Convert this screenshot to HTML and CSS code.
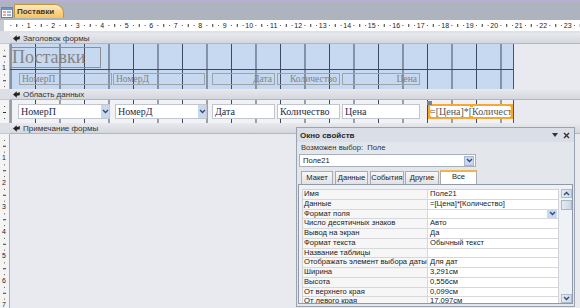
FILE: index.html
```html
<!DOCTYPE html>
<html lang="ru">
<head>
    <meta charset="UTF-8">
    <title>Поставки</title>
    <link rel="stylesheet" href="styles.css">
</head>
<body>
    <div class="topline"></div>

    <div class="tabbar">
        <span class="doc-icon">
            <svg width="12" height="11" viewBox="0 0 12 11">
                <rect x="0.5" y="0.5" width="11" height="10" fill="#fff" stroke="#6f83a3"/>
                <rect x="1" y="1" width="10" height="2" fill="#6d93d2"/>
                <rect x="2" y="4.5" width="3" height="1" fill="#d25050"/>
                <rect x="6" y="4" width="4" height="2" fill="#9fb6da"/>
                <rect x="2" y="7.5" width="3" height="1" fill="#d25050"/>
                <rect x="6" y="7" width="4" height="2" fill="#9fb6da"/>
            </svg>
        </span>
        <div class="doc-tab">Поставки</div>
    </div>

    <div class="hruler-row">
        <div class="corner"></div>
        <div class="hruler">
            <span>1</span><span>2</span><span>3</span><span>4</span><span>5</span><span>6</span>
            <span>7</span><span>8</span><span>9</span><span>10</span><span>11</span><span>12</span>
            <span>13</span><span>14</span><span>15</span><span>16</span><span>17</span><span>18</span>
            <span>19</span><span>20</span><span>21</span><span>22</span><span>23</span>
        </div>
    </div>
    <div class="spacer"></div>

    <!-- Заголовок формы -->
    <div class="bar-row">
        <div class="bar-side"></div>
        <div class="bar">
            <svg width="7" height="7" viewBox="0 0 7 7"><path d="M0 3.5 L3.8 0.3 L3.8 2.3 L6.8 1 L6.8 4.2 L3.8 4.7 L3.8 6.7 Z" fill="#222"/></svg>
            Заголовок формы
        </div>
    </div>
    <div class="sec header-sec">
        <div class="vruler"><span>1</span></div>
        <div class="canvas">
            <div class="form-area header-area">
                <div class="title-label">Поставки</div>
                <div class="label-row">
                    <div class="lbl lbl-p">НомерП</div>
                    <div class="lbl lbl-d">НомерД</div>
                    <div class="lbl lbl-date right">Дата</div>
                    <div class="lbl lbl-qty right">Количество</div>
                    <div class="lbl lbl-price right">Цена</div>
                </div>
            </div>
        </div>
    </div>

    <!-- Область данных -->
    <div class="bar-row">
        <div class="bar-side"></div>
        <div class="bar">
            <svg width="7" height="7" viewBox="0 0 7 7"><path d="M0 3.5 L3.8 0.3 L3.8 2.3 L6.8 1 L6.8 4.2 L3.8 4.7 L3.8 6.7 Z" fill="#222"/></svg>
            Область данных
        </div>
    </div>
    <div class="sec detail-sec">
        <div class="vruler"></div>
        <div class="canvas">
            <div class="form-area detail-area">
                <div class="ctrl combo c-p"><span class="val">НомерП</span><span class="drop"><svg width="7" height="5" viewBox="0 0 7 5"><path d="M1 1 L3.5 3.5 L6 1" stroke="#2b4a7a" fill="none" stroke-width="1.3"/></svg></span></div>
                <div class="ctrl combo c-d"><span class="val">НомерД</span><span class="drop"><svg width="7" height="5" viewBox="0 0 7 5"><path d="M1 1 L3.5 3.5 L6 1" stroke="#2b4a7a" fill="none" stroke-width="1.3"/></svg></span></div>
                <div class="ctrl c-date"><span class="val">Дата</span></div>
                <div class="ctrl c-qty"><span class="val">Количество</span></div>
                <div class="ctrl c-price"><span class="val">Цена</span></div>
                <div class="ctrl c-expr selected">
                    <span class="val">=[Цена]*[Количест</span>
                    <i class="h h-move"></i>
                    <i class="h h-tm"></i><i class="h h-tr"></i>
                    <i class="h h-ml"></i><i class="h h-mr"></i>
                    <i class="h h-bl"></i><i class="h h-bm"></i><i class="h h-br"></i>
                </div>
            </div>
        </div>
    </div>

    <!-- Примечание формы -->
    <div class="bar-row">
        <div class="bar-side"></div>
        <div class="bar">
            <svg width="7" height="7" viewBox="0 0 7 7"><path d="M0 3.5 L3.8 0.3 L3.8 2.3 L6.8 1 L6.8 4.2 L3.8 4.7 L3.8 6.7 Z" fill="#222"/></svg>
            Примечание формы
        </div>
    </div>
    <div class="sec footer-sec">
        <div class="vruler">
            <span>1</span><span>2</span><span>3</span><span>4</span><span>5</span><span>6</span><span>7</span>
        </div>
        <div class="canvas"></div>
    </div>

    <!-- Окно свойств -->
    <div class="props">
        <div class="props-title">
            <span>Окно свойств</span>
            <span class="props-btns">
                <svg width="6" height="4" viewBox="0 0 6 4"><path d="M0 0 L6 0 L3 4 Z" fill="#333"/></svg>
                <svg width="7" height="7" viewBox="0 0 7 7"><path d="M1 1 L6 6 M6 1 L1 6" stroke="#333" stroke-width="1.4"/></svg>
            </span>
        </div>
        <div class="props-sel">Возможен выбор:&nbsp; Поле</div>
        <div class="props-combo">
            <span>Поле21</span>
            <span class="drop"><svg width="7" height="5" viewBox="0 0 7 5"><path d="M1 1 L3.5 3.5 L6 1" stroke="#2b4a7a" fill="none" stroke-width="1.3"/></svg></span>
        </div>
        <div class="props-tabs">
            <div class="ptab t1">Макет</div>
            <div class="ptab t2">Данные</div>
            <div class="ptab t3">События</div>
            <div class="ptab t4">Другие</div>
            <div class="ptab t5 active">Все</div>
        </div>
        <div class="props-page">
            <div class="prop-grid">
                <div class="prow"><div class="pk">Имя</div><div class="pv">Поле21</div></div>
                <div class="prow"><div class="pk">Данные</div><div class="pv">=[Цена]*[Количество]</div></div>
                <div class="prow"><div class="pk">Формат поля</div><div class="pv pv-drop"><span class="drop"><svg width="7" height="5" viewBox="0 0 7 5"><path d="M1 1 L3.5 3.5 L6 1" stroke="#2b4a7a" fill="none" stroke-width="1.3"/></svg></span></div></div>
                <div class="prow"><div class="pk">Число десятичных знаков</div><div class="pv">Авто</div></div>
                <div class="prow"><div class="pk">Вывод на экран</div><div class="pv">Да</div></div>
                <div class="prow"><div class="pk">Формат текста</div><div class="pv">Обычный текст</div></div>
                <div class="prow"><div class="pk">Название таблицы</div><div class="pv"></div></div>
                <div class="prow"><div class="pk">Отображать элемент выбора даты</div><div class="pv">Для дат</div></div>
                <div class="prow"><div class="pk">Ширина</div><div class="pv">3,291см</div></div>
                <div class="prow"><div class="pk">Высота</div><div class="pv">0,556см</div></div>
                <div class="prow"><div class="pk">От верхнего края</div><div class="pv">0,099см</div></div>
                <div class="prow"><div class="pk">От левого края</div><div class="pv">17,097см</div></div>
            </div>
            <div class="scroll">
                <div class="sbtn"><svg width="7" height="5" viewBox="0 0 7 5"><path d="M1 4 L3.5 1.5 L6 4" stroke="#2b4a7a" fill="none" stroke-width="1.3"/></svg></div>
                <div class="thumb"></div>
                <div class="track"></div>
                <div class="sbtn"><svg width="7" height="5" viewBox="0 0 7 5"><path d="M1 1 L3.5 3.5 L6 1" stroke="#2b4a7a" fill="none" stroke-width="1.3"/></svg></div>
            </div>
        </div>
    </div>
</body>
</html>
```

FILE: styles.css
```css
* {
    box-sizing: border-box;
}

body {
    margin: 0;
    width: 580px;
    height: 308px;
    overflow: hidden;
    position: relative;
    background: #e9ebf0;
    font-family: "Liberation Sans", Arial, sans-serif;
}

.topline {
    height: 2px;
    background: #b9aed5;
}

/* Вкладка документа */
.tabbar {
    height: 18px;
    background: #adb4be;
    display: flex;
    align-items: flex-start;
    padding-top: 2px;
}

.doc-icon {
    width: 13px;
    padding-top: 3px;
    padding-left: 1px;
    display: flex;
}

.doc-tab {
    height: 14px;
    margin-left: 1px;
    padding: 0 9px 0 2px;
    background: linear-gradient(#fdebc0, #f9d386 55%, #f6c45d);
    border: 1px solid #c39440;
    border-bottom: none;
    border-radius: 2px 9px 0 0;
    font-size: 8px;
    font-weight: bold;
    color: #3b3b3b;
    line-height: 13px;
}

/* Линейки */
.hruler-row {
    display: flex;
    height: 11px;
}

.corner {
    width: 10px;
    background: #c7ccd4;
}

.hruler {
    flex: 1;
    display: flex;
    padding-left: 12.75px;
    font-size: 7px;
    line-height: 11px;
    color: #222;
    background-color: #fff;
    background-image:
        linear-gradient(90deg, transparent 11.75px, #333 11.75px, #333 12.75px, transparent 12.75px),
        linear-gradient(90deg, transparent 5.6px, #555 5.6px, #555 6.6px, transparent 6.6px, transparent 17.9px, #555 17.9px, #555 18.9px, transparent 18.9px);
    background-size: 24.5px 3px, 24.5px 1px;
    background-repeat: repeat-x;
    background-position: 0.5px 4px, 0.5px 5px;
}

.hruler span {
    width: 24.5px;
    flex: none;
    text-align: center;
}

.spacer {
    height: 2px;
    background: #dee1e7;
}

.vruler {
    width: 10px;
    flex: none;
    display: flex;
    flex-direction: column;
    align-items: center;
    padding-top: 12.25px;
    padding-right: 1px;
    font-size: 7px;
    color: #222;
    background-color: #f4f4f5;
    border-right: 1px solid #a8aeb8;
    background-image:
        linear-gradient(180deg, transparent 11.75px, #333 11.75px, #333 12.75px, transparent 12.75px),
        linear-gradient(180deg, transparent 5.6px, #555 5.6px, #555 6.6px, transparent 6.6px, transparent 17.9px, #555 17.9px, #555 18.9px, transparent 18.9px);
    background-size: 3px 24.5px, 1px 24.5px;
    background-repeat: repeat-y;
    background-position: 3px 0, 4px 0;
}

.vruler span {
    height: 24.5px;
    line-height: 24.5px;
    flex: none;
}

/* Полосы разделов */
.bar-row {
    display: flex;
    height: 11px;
}

.bar-side {
    width: 10px;
    background: #dcdfe5;
    border-bottom: 1px solid #c4c8d0;
}

.bar {
    flex: 1;
    display: flex;
    align-items: center;
    gap: 3px;
    padding-left: 3px;
    font-size: 8px;
    color: #333;
    background: linear-gradient(#e7e9ed, #d4d7de);
    border-bottom: 1px solid #b1b6c0;
}

/* Разделы */
.sec {
    display: flex;
}

.header-sec { height: 45px; }
.detail-sec { height: 23px; }
.footer-sec { height: 176px; }

.canvas {
    flex: 1;
    display: flex;
    background: #e8eaef;
}

.form-area {
    width: 504px;
    flex: none;
    border-right: 1px solid #4a5566;
    background-image: linear-gradient(90deg, #3d495b 1px, transparent 1px);
    background-size: 24.5px 100%;
    background-position: 0.5px 0;
}

.header-area {
    background-color: #c6d9f0;
    background-image:
        linear-gradient(180deg, transparent 25px, #3d495b 25px, #3d495b 26px, transparent 26px),
        linear-gradient(90deg, #3d495b 1px, transparent 1px);
    background-size: 100% 100%, 24.5px 100%;
    background-position: 0 0, 0.5px 0;
    padding-top: 3px;
}

.title-label {
    width: 91px;
    height: 21px;
    border: 1px solid #8d8f94;
    font-family: "Liberation Serif", "Times New Roman", serif;
    font-size: 18px;
    line-height: 19px;
    color: #858585;
    padding-left: 1px;
}

.label-row {
    display: flex;
    margin-top: 5px;
    height: 12px;
}

.lbl {
    height: 12px;
    border: 1px solid #9ea3aa;
    font-family: "Liberation Serif", "Times New Roman", serif;
    font-size: 9.5px;
    line-height: 10px;
    color: #828282;
    padding: 0 2px;
    white-space: nowrap;
    overflow: hidden;
}

.lbl.right { text-align: right; }

.lbl-p { margin-left: 9px; width: 93px; }
.lbl-d { margin-left: 1px; width: 92px; }
.lbl-date { margin-left: 7px; width: 63px; }
.lbl-qty { margin-left: 2px; width: 63px; }
.lbl-price { margin-left: 2px; width: 78px; }

.detail-area {
    background-color: #f1f2f5;
    display: flex;
    padding-top: 4px;
}

.ctrl {
    height: 15px;
    display: flex;
    background: #fff;
    border: 1px solid #c2c6cc;
    font-family: "Liberation Serif", "Times New Roman", serif;
    font-size: 10px;
    line-height: 13px;
    color: #1f2c4a;
    position: relative;
}

.ctrl .val {
    flex: 1;
    padding-left: 2px;
    white-space: nowrap;
    overflow: hidden;
}

.combo .drop {
    width: 8px;
    background: #c9d7ef;
    display: flex;
    align-items: center;
    justify-content: center;
}

.c-p { margin-left: 8px; width: 92px; }
.c-d { margin-left: 5px; width: 92px; }
.c-date { margin-left: 5px; width: 63px; }
.c-qty { margin-left: 2px; width: 63px; }
.c-price { margin-left: 2px; width: 78px; }
.c-expr { margin-left: 8px; width: 85px; }

.selected {
    border: 2px solid #f6a735;
    color: #555;
    line-height: 11px;
}

.selected .val { padding-left: 0; }

.h {
    position: absolute;
    width: 3px;
    height: 3px;
    background: #f6a735;
}

.h-move { left: -3px; top: -5px; width: 5px; height: 4px; background: #7d8290; }
.h-tm { left: 40px; top: -2px; }
.h-tr { right: -2px; top: -2px; }
.h-ml { left: -2px; top: 4px; }
.h-mr { right: -2px; top: 4px; }
.h-bl { left: -2px; bottom: -2px; }
.h-bm { left: 40px; bottom: -2px; }
.h-br { right: -2px; bottom: -2px; }

/* Окно свойств */
.props {
    position: absolute;
    left: 296px;
    top: 127px;
    width: 279px;
    height: 180px;
    background: #e3e6eb;
    border: 1px solid #9aa3b1;
    font-size: 7.6px;
    color: #222;
}

.props-title {
    height: 14px;
    display: flex;
    align-items: center;
    justify-content: space-between;
    padding: 0 4px 0 3px;
    font-size: 8px;
    font-weight: bold;
    color: #2a2a2a;
    background: #dadee6;
}

.props-btns {
    display: flex;
    align-items: center;
    gap: 5px;
}

.props-sel {
    height: 12px;
    padding-left: 4px;
    line-height: 11px;
    color: #333;
}

.props-combo {
    width: 177px;
    height: 13px;
    margin-left: 2px;
    display: flex;
    align-items: center;
    justify-content: space-between;
    padding: 0 1px 0 3px;
    background: #fff;
    border: 1px solid #a9b0ba;
}

.props-combo .drop {
    width: 10px;
    height: 10px;
    background: #c9d7ef;
    border: 1px solid #a7b7d2;
    display: flex;
    align-items: center;
    justify-content: center;
}

.props-tabs {
    display: flex;
    align-items: flex-end;
    height: 17px;
    padding-left: 4px;
    padding-top: 3px;
}

.ptab {
    height: 13px;
    text-align: center;
    line-height: 12px;
    background: linear-gradient(#f7f7f7, #e2e2e2);
    border: 1px solid #a8abb0;
    border-bottom: none;
    color: #222;
}

.t1 { width: 32px; }
.t2 { width: 33px; margin-left: 2px; }
.t3 { width: 34px; margin-left: 2px; }
.t4 { width: 34px; margin-left: 1px; }
.t5 { width: 37px; margin-left: 1px; }

.ptab.active {
    height: 14px;
    background: #fff;
    border-top: 2px solid #f3b24a;
    line-height: 10px;
}

.props-page {
    height: 120px;
    margin: 0 1px 0 1px;
    display: flex;
    gap: 2px;
    padding: 4px 1px 0 3px;
    background: #eff1f4;
    border: 1px solid #8f99a8;
    overflow: hidden;
}

.prop-grid {
    width: 257px;
    flex: none;
    border: 1px solid #cfd2d6;
    border-bottom: none;
    background: #fff;
}

.prow {
    display: grid;
    grid-template-columns: 125px 1fr;
    height: 9.75px;
    border-bottom: 1px solid #d6d8db;
    line-height: 8.5px;
}

.pk {
    background: #f6f6f6;
    border-right: 1px solid #d6d8db;
    padding-left: 1px;
    white-space: nowrap;
    overflow: hidden;
}

.pv {
    padding-left: 2px;
    white-space: nowrap;
    overflow: hidden;
}

.pv-drop {
    display: flex;
    justify-content: flex-end;
    padding-right: 1px;
}

.pv-drop .drop {
    width: 10px;
    height: 8px;
    background: #c9d7ef;
    display: flex;
    align-items: center;
    justify-content: center;
}

.scroll {
    width: 11px;
    flex: none;
    display: flex;
    flex-direction: column;
    background: #eef1f5;
}

.sbtn {
    height: 9px;
    flex: none;
    display: flex;
    align-items: center;
    justify-content: center;
    background: linear-gradient(90deg, #e4eaf3, #cfd9e8);
    border: 1px solid #b3bccb;
}

.thumb {
    height: 10px;
    margin-top: 2px;
    background: linear-gradient(90deg, #e4eaf3, #c9d5e7);
    border: 1px solid #a9b5c8;
}

.track {
    flex: 1;
}
```
